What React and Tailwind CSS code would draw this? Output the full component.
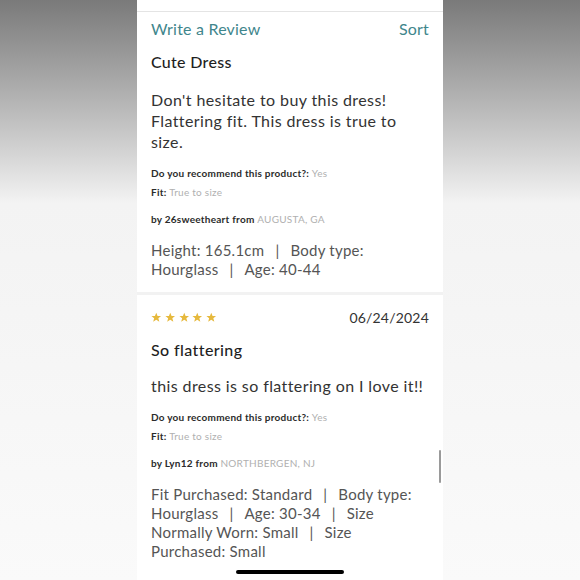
import React from "react";

const font = { fontFamily: "Lato, 'Open Sans', sans-serif" };

function Star() {
  return (
    <svg width="10.5" height="10.5" viewBox="0 0 24 24" className="fill-[#e6b93d]">
      <polygon points="12,1.5 15,9 23,9.3 16.8,14.4 19,22.3 12,17.8 5,22.3 7.2,14.4 1,9.3 9,9" />
    </svg>
  );
}

function Sep() {
  return <span className="mx-[11px]">|</span>;
}

function Facts({ rec, fit, user, place }) {
  return (
    <>
      <div className="mt-[14px] text-[10px] leading-[14px] tracking-[0.25px] font-bold text-[#2b2b2b]">
        Do you recommend this product?: <span className="font-normal text-[#b0b0b0]">{rec}</span>
      </div>
      <div className="mt-[5px] text-[10px] leading-[14px] tracking-[0.25px] font-bold text-[#2b2b2b]">
        Fit: <span className="font-normal text-[#b0b0b0]">{fit}</span>
      </div>
      <div className="mt-[13px] text-[10px] leading-[14px] tracking-[0.25px] font-bold text-[#2b2b2b]">
        by {user} from <span className="font-normal text-[#b0b0b0]">{place}</span>
      </div>
    </>
  );
}

export default function App() {
  return (
    <div
      style={font}
      className="w-[580px] h-[580px] flex justify-center bg-gradient-to-b from-[#7a7a7a] via-[#f3f3f3] via-[35%] to-[#fafafa] overflow-hidden"
    >
      <div className="relative w-[306px] h-full bg-[#f2f2f2] flex flex-col">
        <div className="h-[12px] bg-white border-b border-[#e4e4e4] shrink-0" />

        <div className="bg-white px-[14px] pb-[13px]">
          <div className="mt-[6px] h-[22px] flex justify-between items-center text-[16px] tracking-[0.2px] text-[#3f868c]">
            <span>Write a Review</span>
            <span>Sort</span>
          </div>
          <div className="mt-[12px] text-[16px] leading-[20px] tracking-[0.3px] font-medium text-[#1f1f1f]">Cute Dress</div>
          <div className="mt-[17px] text-[16px] leading-[21px] tracking-[0.4px] text-[#333]">
            <div>Don't hesitate to buy this dress!</div>
            <div>Flattering fit. This dress is true to</div>
            <div>size.</div>
          </div>
          <Facts rec="Yes" fit="True to size" user="26sweetheart" place="AUGUSTA, GA" />
          <div className="mt-[15px] text-[15px] leading-[19px] tracking-[0.25px] text-[#555]">
            <div>Height: 165.1cm<Sep />Body type:</div>
            <div>Hourglass<Sep />Age: 40-44</div>
          </div>
        </div>

        <div className="mt-[3px] bg-white px-[14px] pb-[14px] flex-1">
          <div className="mt-[12px] h-[20px] flex justify-between items-center">
            <div className="flex gap-[3.25px]">
              <Star />
              <Star />
              <Star />
              <Star />
              <Star />
            </div>
            <span className="text-[14px] tracking-[0.2px] text-[#333]">06/24/2024</span>
          </div>
          <div className="mt-[13px] text-[16px] leading-[20px] tracking-[0.4px] font-medium text-[#1f1f1f]">So flattering</div>
          <div className="mt-[15px] text-[16px] leading-[21px] tracking-[0.4px] text-[#333]">
            this dress is so flattering on I love it!!
          </div>
          <Facts rec="Yes" fit="True to size" user="Lyn12" place="NORTHBERGEN, NJ" />
          <div className="mt-[15px] text-[15px] leading-[19px] tracking-[0.25px] text-[#555]">
            <div>Fit Purchased: Standard<Sep />Body type:</div>
            <div>Hourglass<Sep />Age: 30-34<Sep />Size</div>
            <div>Normally Worn: Small<Sep />Size</div>
            <div>Purchased: Small</div>
          </div>
        </div>

        <div className="absolute right-[2px] top-[450px] w-[2.5px] h-[33px] rounded-full bg-[#9a9a9a]" />
        <div className="absolute left-[99px] bottom-[6px] w-[108px] h-[4px] rounded-full bg-black" />
      </div>
    </div>
  );
}
